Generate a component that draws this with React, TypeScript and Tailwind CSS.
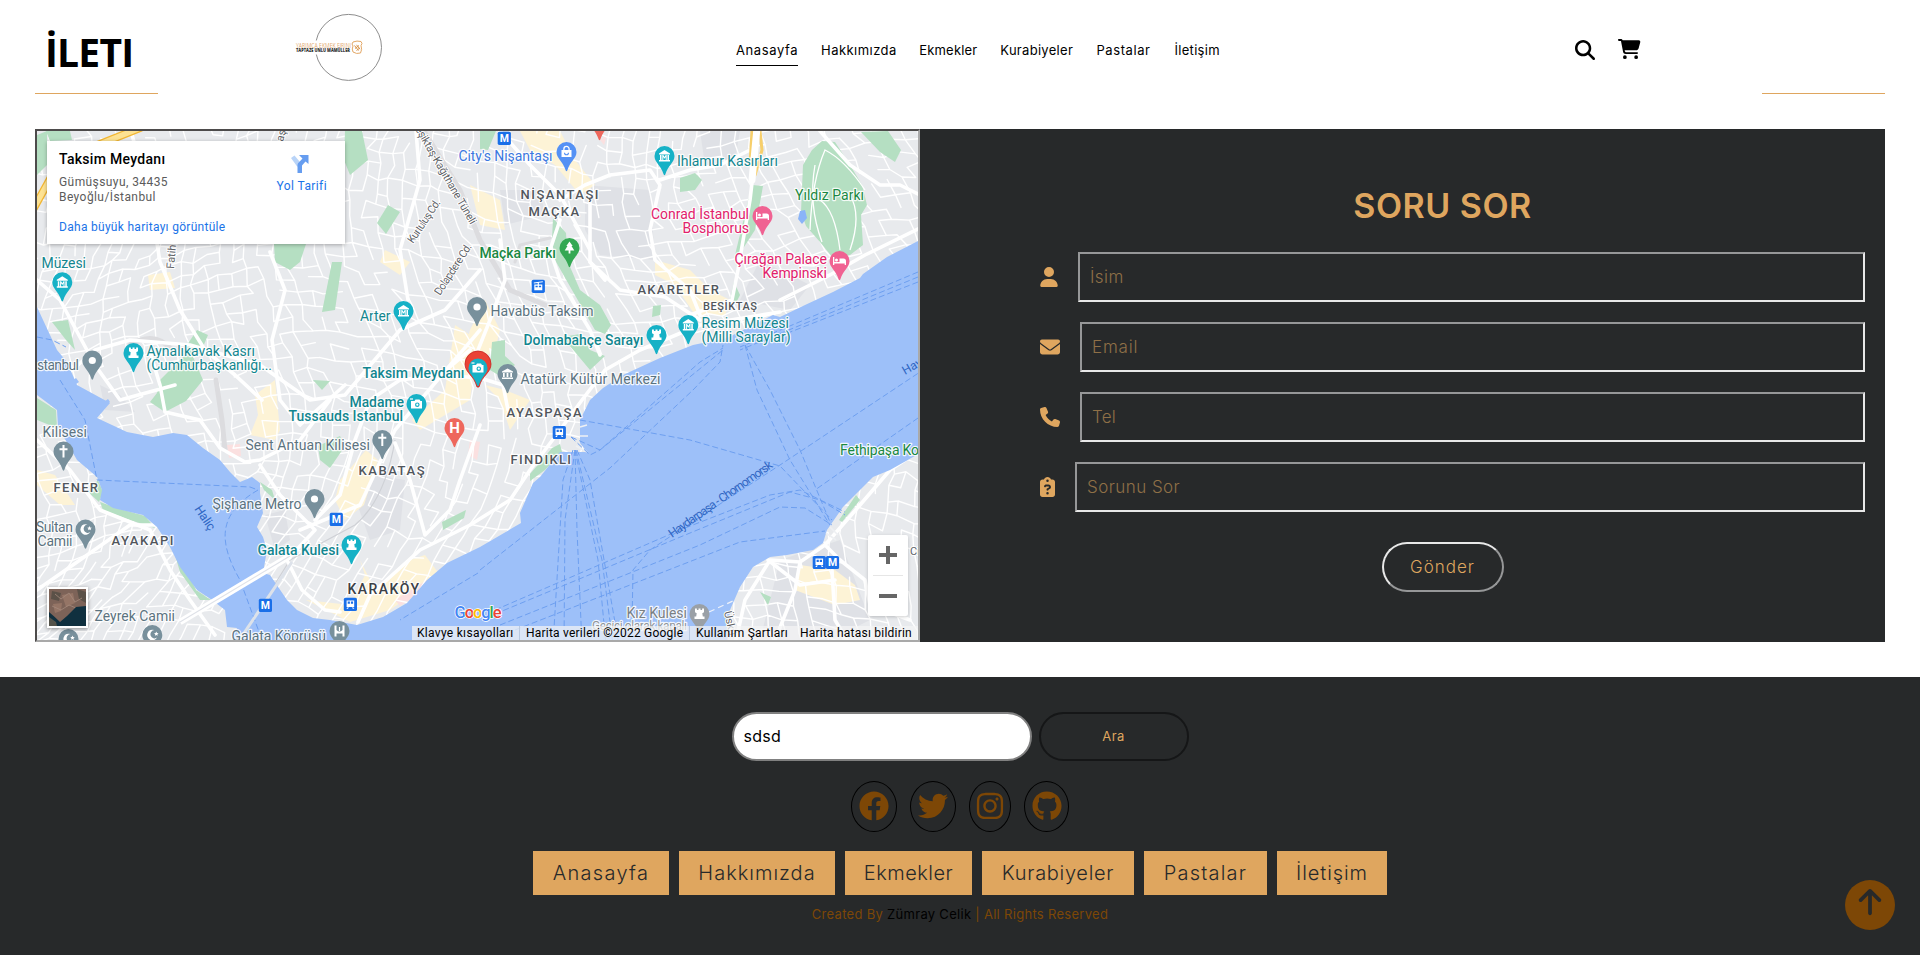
import React from "react";
import { FaMagnifyingGlass, FaCartShopping, FaUser, FaEnvelope, FaPhone, FaArrowUp, FaClipboardQuestion } from "react-icons/fa6";
import { FaFacebook, FaTwitter, FaInstagram, FaGithub } from "react-icons/fa";

const TEAL = "#12868f";
const SLATE = "#5b7380";
const GREEN = "#1a8842";
const PINK = "#e2216b";
const AREA = "#51565c";

/* ---------- street mesh ---------- */
function buildStreets() {
  let seed = 11;
  const rnd = () => {
    seed = (seed * 16807) % 2147483647;
    return seed / 2147483647;
  };
  const cols = 78;
  const rows = 56;
  const nodes: number[][][] = [];
  for (let j = 0; j < rows; j++) {
    nodes[j] = [];
    for (let i = 0; i < cols; i++) {
      const x = i * 13.5 - 60 + Math.sin(j / 5 + i / 17) * 30 + Math.sin(j / 13) * 40 + (rnd() - 0.5) * 6;
      const y = j * 13 + 60 + Math.sin(i / 7 + j / 19) * 28 + (rnd() - 0.5) * 6;
      nodes[j][i] = [x, y];
    }
  }
  let d = "";
  for (let j = 0; j < rows - 1; j++) {
    for (let i = 0; i < cols - 1; i++) {
      const a = nodes[j][i];
      const b = nodes[j][i + 1];
      const c = nodes[j + 1][i];
      const p = a[0].toFixed(1) + " " + a[1].toFixed(1);
      if (rnd() < 0.62) d += "M" + p + "L" + b[0].toFixed(1) + " " + b[1].toFixed(1);
      if (rnd() < 0.74) d += "M" + p + "L" + c[0].toFixed(1) + " " + c[1].toFixed(1);
    }
  }
  return d;
}
const STREETS = buildStreets();

const WATER =
  "M920 240 L887 257 863 274 860 278 833 292 805 305 780 317 773 315 763 320 727 338 693 345 660 358 623 375 603 388 590 400 580 420 580 443 587 452 560 452 540 477 533 483 520 513 521 523 480 547 447 563 427 580 407 603 383 617 357 625 330 620 313 618 297 610 287 600 270 575 263 573 267 550 263 537 257 527 263 513 260 493 260 483 252 477 240 482 230 472 220 460 203 448 187 435 173 433 153 437 127 432 97 418 110 403 77 385 67 362 57 350 37 307 37 395 57 410 58 427 77 460 97 477 102 490 100 500 113 508 143 515 157 527 170 547 180 567 197 590 212 600 225 610 227 627 237 628 230 645 727 645 730 610 740 587 753 567 770 557 787 555 813 550 823 543 827 530 843 507 873 477 890 470 920 453 Z";

const PARKS = [
  "M37 135 L47 131 47 165 37 175 Z",
  "M480 131 L496 131 488 150 480 149 Z",
  "M345 131 L362 131 368 160 350 175 344 160 Z",
  "M377 223 L388 205 400 212 386 234 Z",
  "M274 244 L306 244 300 262 290 270 275 262 Z",
  "M322 312 L332 262 342 262 335 310 Z",
  "M46 131 L70 131 72 140 50 141 Z",
  "M187 345 L197 330 208 335 200 354 186 352 Z",
  "M52 322 L68 320 75 350 66 340 Z",
  "M157 393 L150 402 165 412 186 401 203 380 190 350 160 380 Z",
  "M553 218 L566 233 568 262 580 290 600 305 611 325 605 334 595 330 572 290 555 260 552 240 Z",
  "M562 337 L580 334 590 350 605 356 590 370 575 352 Z",
  "M492 342 L505 340 505 356 515 365 500 376 490 370 Z",
  "M803 165 L812 150 822 141 835 142 850 165 862 185 867 205 861 215 863 245 850 255 833 258 820 242 806 226 801 212 Z",
  "M861 132 L888 131 901 150 895 162 880 152 Z",
  "M752 185 L763 186 755 230 742 250 735 255 Z",
  "M680 178 L695 173 702 180 695 190 680 192 Z",
  "M734 282 L740 295 736 303 730 300 Z",
  "M653 306 L661 305 660 315 652 317 Z",
  "M37 398 L56 410 57 428 37 420 Z",
  "M98 480 L103 492 99 502 88 492 Z",
  "M100 502 L120 509 145 516 155 528 130 520 103 510 Z",
  "M172 545 L182 560 196 590 211 600 200 600 180 572 Z",
  "M318 446 L340 436 345 446 330 468 320 460 Z",
  "M260 482 L272 490 275 500 264 490 Z",
  "M442 522 L466 510 464 518 443 530 Z",
  "M552 448 L560 444 562 452 545 470 530 481 530 474 Z",
  "M839 520 L856 495 860 500 842 522 Z",
  "M313 380 L330 381 322 390 Z",
  "M760 592 L771 597 768 605 Z",
];

const SHOPS = [
  "M520 131 L560 131 575 160 595 185 580 195 555 165 530 150 Z",
  "M655 260 L690 270 710 290 730 300 725 315 695 315 675 285 655 275 Z",
  "M485 300 L500 330 495 350 480 360 465 350 470 330 Z",
  "M455 325 L478 340 470 400 420 430 412 420 445 390 Z",
  "M485 385 L505 390 530 400 510 430 500 400 Z",
  "M340 480 L366 450 378 460 364 505 345 520 335 500 Z",
  "M306 600 L350 605 365 575 360 560 375 590 410 560 425 555 440 575 390 610 350 622 Z",
  "M255 395 L275 380 280 430 275 440 250 435 258 415 Z",
  "M148 275 L170 272 175 288 150 290 Z",
  "M37 470 L55 475 75 505 60 505 37 485 Z",
  "M800 565 L835 570 855 585 860 600 835 605 795 590 Z",
  "M470 185 L500 200 505 230 480 225 Z",
  "M385 250 L410 262 400 275 380 262 Z",
];

const GRAYS = [
  "M585 185 L650 190 655 260 600 255 585 230 Z",
  "M700 131 L740 131 735 160 705 165 Z",
  "M345 470 L405 480 400 530 370 540 Z",
  "M100 385 L120 395 135 412 105 410 Z",
  "M760 260 L810 285 790 310 740 300 Z",
  "M500 190 L540 190 545 215 505 225 Z",
  "M780 560 L840 540 870 620 830 640 760 640 Z",
  "M265 515 L285 510 290 540 275 550 Z",
];

const MAJOR = [
  "M37 280 L60 300 95 365 120 400 175 385",
  "M131 131 L150 200 160 262 180 310 205 350 235 375 262 400",
  "M37 345 L70 372 95 350 130 340 190 345 260 365 310 400 345 395 400 330 445 310 480 270",
  "M270 252 L285 290 272 340 280 400 300 425 345 385",
  "M150 352 L160 385 165 412 200 420 220 448 245 462 260 460 300 440 330 400",
  "M260 465 L280 495 300 515 315 530 287 560 302 590 325 610 340 612",
  "M315 520 L340 495 355 440 370 400 400 380 440 375 470 350",
  "M300 530 L360 505 395 430 480 330",
  "M358 622 L370 595 420 550 470 525 510 500 530 470 560 430 582 400 605 370 640 350 700 325 780 312",
  "M440 375 L480 378 503 385 508 410",
  "M395 443 L410 480 425 535 450 510 460 480 480 425",
  "M780 300 L830 275 865 255 920 228",
  "M758 131 L750 200 738 270 732 300 690 315",
  "M560 220 L550 250 560 280 590 330 600 355",
  "M500 240 L505 280 490 320 478 350",
  "M590 262 L620 290 665 297 700 320",
  "M560 200 L585 185 610 175 650 170 660 185 650 230 655 260 690 290 700 315",
  "M500 131 L530 165 560 195 590 250",
  "M590 190 L590 262 605 280",
  "M820 131 L850 165 880 185 900 185 920 195",
  "M37 440 L70 470 100 510 150 530 170 570 190 600 215 635",
  "M37 590 L80 560 130 525 160 525",
  "M735 645 L745 600 770 560 800 562 825 545 860 505 890 470 920 450",
  "M825 545 L840 560 865 580 870 605 910 620",
  "M832 570 L835 620 850 645",
  "M800 562 L795 590 775 640",
  "M768 560 L800 585 835 580",
  "M416 131 L420 180 400 250 408 300",
  "M660 180 L690 170 720 165 750 150",
];

const FERRIES = [
  "M37 337 L52 340 66 347",
  "M60 380 L85 420 97 480 250 487 258 490",
  "M258 490 C215 515 220 545 240 580 L262 640",
  "M580 420 L690 440 780 466 832 520",
  "M573 450 L563 480 553 645",
  "M575 450 L565 520 564 645",
  "M575 450 L577 530 582 645",
  "M575 450 L598 560 606 645",
  "M576 450 L602 560 613 645",
  "M577 450 L590 480 619 645",
  "M571 437 L590 455 600 450 723 350",
  "M571 437 L600 450 700 362 723 348",
  "M480 570 L610 468 693 390 720 362 723 345",
  "M495 610 L680 530 770 495 800 490 845 512",
  "M495 614 L690 533 790 492 820 500 845 515",
  "M500 625 L700 545 780 507 805 508 832 525",
  "M515 630 L740 542 825 531",
  "M632 625 L633 570 650 550 680 530 780 465 920 372",
  "M918 418 L815 490",
  "M745 345 L757 390 790 460 830 525",
  "M745 345 L770 390 800 450 830 522",
  "M918 272 L740 347",
  "M918 277 L740 350",
  "M918 282 L770 340",
  "M478 573 L400 620",
];

type Label = [string, number, number, number, string, number?, boolean?];
const LABELS: Label[] = [
  ["Müzesi", 41.5, 268, 44.5, TEAL],
  ["Arter", 360, 321, 30.5, TEAL],
  ["Aynalıkavak Kasrı", 146.5, 356, 108.5, TEAL],
  ["(Cumhurbaşkanlığı...", 146.5, 370, 125.5, TEAL],
  ["stanbul", 37, 370, 42, SLATE],
  ["Taksim Meydanı", 362.5, 378, 102, TEAL, 14, true],
  ["City's Nişantaşı", 458.5, 161, 94, "#3b78e0"],
  ["Maçka Parkı", 479.5, 258, 76.5, GREEN, 14, true],
  ["Ihlamur Kasırları", 677, 166, 101, TEAL],
  ["Yıldız Parkı", 795, 200, 69, GREEN],
  ["Conrad İstanbul", 651, 219, 98, PINK],
  ["Bosphorus", 682.5, 233, 66.5, PINK],
  ["Çırağan Palace", 734.5, 264, 92.5, PINK],
  ["Kempinski", 762.5, 278, 64.5, PINK],
  ["Havabüs Taksim", 490.5, 316, 103, SLATE],
  ["Resim Müzesi", 701.5, 328, 87.5, TEAL],
  ["(Milli Saraylar)", 701.5, 342, 89, TEAL],
  ["Dolmabahçe Sarayı", 523.5, 345, 120, TEAL, 14, true],
  ["Atatürk Kültür Merkezi", 520.5, 383.5, 140, SLATE],
  ["Kilisesi", 42.5, 437, 44.5, SLATE],
  ["Madame", 349.5, 407, 54.5, TEAL, 14, true],
  ["Tussauds Istanbul", 288.5, 421, 114.5, TEAL, 14, true],
  ["Sent Antuan Kilisesi", 245.5, 450, 124.5, SLATE],
  ["Şişhane Metro", 212.5, 508.5, 89, SLATE],
  ["Sultan", 36, 532, 37, SLATE],
  ["Camii", 37.5, 546, 35, SLATE],
  ["Galata Kulesi", 257.5, 555, 81.5, TEAL, 14, true],
  ["Zeyrek Camii", 94.5, 621, 80.5, SLATE],
  ["Galata Köprüsü", 231.5, 641, 94.5, SLATE],
  ["Kız Kulesi", 626.5, 618, 60.5, "#7a8084"],
  ["Geçici olarak kapalı", 592, 630, 95, "#8f9498", 12],
  ["Fethipaşa Ko", 840, 454.5, 79, GREEN],
  ["NİŞANTAŞI", 520.5, 199, 78, AREA, 13],
  ["MAÇKA", 528.5, 215.5, 50.5, AREA, 13],
  ["AKARETLER", 637.5, 294, 81.5, AREA, 13],
  ["BEŞİKTAŞ", 703, 310, 54, AREA, 11],
  ["KABATAŞ", 358.5, 475, 66, AREA, 13],
  ["FENER", 53.5, 491.5, 44.5, AREA, 13],
  ["AYAKAPI", 111.5, 544.5, 62, AREA, 13],
  ["KARAKÖY", 347.5, 594, 71.5, "#3b4046", 14, true],
  ["AYASPAŞA", 506.5, 417, 75, AREA, 13],
  ["FINDIKLI", 510.5, 464, 60.5, AREA, 13],
];

type Pin = [number, number, string, string];
const T = "#16b1c6";
const S = "#78909c";
const PINS: Pin[] = [
  [62.3, 282.3, T, "museum"],
  [133.5, 353, T, "castle"],
  [92.3, 360.5, S, "dot"],
  [403.5, 311, T, "museum"],
  [566.5, 152, "#5491f5", "bag"],
  [599.5, 121, "#ee675c", "dot"],
  [664.5, 156, T, "museum"],
  [762.5, 216, "#f06292", "bed"],
  [839.5, 261, "#f06292", "bed"],
  [569.5, 248, "#34a853", "tree"],
  [477, 307, S, "dot"],
  [656.5, 335, T, "castle"],
  [688.3, 325, T, "museum"],
  [507.5, 374, S, "bank"],
  [416.5, 404, T, "camera"],
  [454.5, 428, "#ee675c", "H"],
  [382.3, 440, S, "cross"],
  [63.5, 451.5, S, "cross"],
  [85.5, 529.5, S, "moon"],
  [314.5, 499, S, "dot"],
  [351.5, 545, T, "castle"],
  [152.3, 635, S, "moon"],
  [68.5, 639, S, "moon"],
  [339.5, 631, S, "bridge"],
  [699.5, 614, "#9aa0a6", "castle"],
];

function Glyph({ kind }: { kind: string }) {
  switch (kind) {
    case "museum":
      return <path d="M-5.5 -2.5 L0 -6 5.5 -2.5 V-1.5 H-5.5Z M-4.5 -1 H-3 V4 H-4.5Z M3 -1 H4.5 V4 H3Z M-5.5 4 H5.5 V5.5 H-5.5Z M-2.2 4 V-1 H-1.2 L0 1 1.2 -1 H2.2 V4 H1.2 V1 L0 2.7 -1.2 1 V4Z" fill="#fff" />;
    case "bank":
      return <path d="M-5.5 -2.5 L0 -5.5 5.5 -2.5 V-1.5 H-5.5Z M-4.5 -1 H-2.8 V3 H-4.5Z M-0.9 -1 H0.9 V3 H-0.9Z M2.8 -1 H4.5 V3 H2.8Z M-5.5 3.6 H5.5 V5 H-5.5Z" fill="#fff" />;
    case "castle":
      return <path d="M-4.5 -5.5 H-2.6 V-4 H-1 V-5.5 H1 V-4 H2.6 V-5.5 H4.5 V-1.8 L2.8 -0.8 3.3 2.5 H5 V5 H-5 V2.5 H-3.3 L-2.8 -0.8 -4.5 -1.8Z" fill="#fff" />;
    case "dot":
      return <circle r="3.6" fill="#fff" />;
    case "bag":
      return (
        <g>
          <path d="M-5 -2 H5 V5 H-5Z" fill="#fff" />
          <path d="M-2.6 -1.5 V-3 A2.6 2.6 0 0 1 2.6 -3 V-1.5" fill="none" stroke="#fff" strokeWidth="1.3" />
          <path d="M-2 0.8 A2 2 0 0 0 2 0.8" fill="none" stroke="#5491f5" strokeWidth="1.1" />
        </g>
      );
    case "bed":
      return <path d="M-6.5 -4 H-5.2 V1 H0 V-2.5 H4 Q6.5 -2.5 6.5 0 V4 H5.2 V2.4 H-5.2 V4 H-6.5Z M-4.5 -1 A1.5 1.5 0 1 0 -1.5 -1 A1.5 1.5 0 1 0 -4.5 -1" fill="#fff" />;
    case "tree":
      return <path d="M0 -6.5 L3.2 -2 H2 L4.8 2.4 H0.9 V5.5 H-0.9 V2.4 H-4.8 L-2 -2 H-3.2Z" fill="#fff" />;
    case "camera":
      return (
        <g>
          <path d="M-5.5 -3 H-2 L-1 -4.5 H3 L4 -3 H5.5 V4.5 H-5.5Z" fill="#fff" />
          <circle cx="0.8" cy="0.7" r="2.3" fill="#16b1c6" />
          <circle cx="0.8" cy="0.7" r="1.1" fill="#fff" />
          <path d="M-6.5 -5 h3" stroke="#fff" strokeWidth="1.2" />
        </g>
      );
    case "cross":
      return <path d="M-1 -6.5 H1 V-3.3 H4 V-1.3 H1 V6 H-1 V-1.3 H-4 V-3.3 H-1Z" fill="#fff" />;
    case "moon":
      return <path d="M2 -5 A5.3 5.3 0 1 0 4.8 2.6 A4.2 4.2 0 1 1 2 -5Z M4 -3.5 l.7 1.5 1.6 .2 -1.2 1 .3 1.6 -1.4-.8 -1.4 .8 .3-1.6 -1.2-1 1.6-.2Z" fill="#fff" />;
    case "bridge":
      return <path d="M-5 -5.5 H-3 V-1 Q0 2 3 -1 V-5.5 H5 V5.5 H3 V2.5 H-3 V5.5 H-5Z M-0.6 -4 h1.2 v4 h-1.2Z" fill="#fff" />;
    default:
      return (
        <text y="5.2" textAnchor="middle" fontSize="15" fontWeight="700" fill="#fff">
          H
        </text>
      );
  }
}

function PinShape({ color, r = 10 }: { color: string; r?: number }) {
  return <path transform={`scale(${r / 10})`} d="M0 -10 A10 10 0 0 1 10 0 C10 6.5 4 8.5 0.8 18.5 Q0 20 -0.8 18.5 C-4 8.5 -10 6.5 -10 0 A10 10 0 0 1 0 -10Z" fill={color} />;
}

const BADGES: [number, number, string][] = [
  [504.3, 138.3, "M"],
  [538.3, 286.3, "cable"],
  [336.3, 519.4, "M"],
  [265.4, 605.4, "M"],
  [350.4, 604.4, "tram"],
  [559.3, 432.5, "tram"],
  [819.3, 562.5, "tram"],
  [832.5, 562.5, "M"],
];

function CityMap() {
  return (
    <svg className="block size-full" viewBox="37 131 881 509" preserveAspectRatio="none" fontFamily="Roboto, 'Noto Sans', sans-serif">
      <rect x="30" y="125" width="900" height="520" fill="#e8eaed" />
      <g fill="#dfe1e6">{GRAYS.map((d) => <path key={d} d={d} />)}</g>
      <g fill="#fdf3d6">{SHOPS.map((d) => <path key={d} d={d} />)}</g>
      <g fill="#fbe0e0">
        <path d="M227 445 L240 444 241 456 229 458Z" />
        <path d="M600 140 L607 135 604 145Z" />
        <path d="M470 440 L480 442 477 460 468 455Z" />
        <path d="M395 600 L430 578 436 583 400 606Z" />
      </g>
      <path d={STREETS} stroke="#fff" strokeWidth="1.4" fill="none" strokeLinecap="round" />
      <g fill="#b5dfc2">{PARKS.map((d) => <path key={d} d={d} />)}</g>
      <g stroke="#dcdcdf" fill="none" strokeWidth="5" strokeLinecap="round">
        <path d="M424 131 L460 190 480 240 510 290 545 305" />
        <path d="M216 380 L222 420 225 450" />
        <path d="M130 345 Q155 330 172 350" />
        <path d="M515 262 L520 245 550 238" strokeWidth="3" />
      </g>
      <path d="M395 440 Q385 500 355 525 L290 560 240 640" stroke="#cfd1d6" strokeWidth="1.2" fill="none" />
      <g stroke="#fff" fill="none" strokeWidth="3.6" strokeLinejoin="round" strokeLinecap="round">
        {MAJOR.map((d) => <path key={d} d={d} />)}
      </g>
      <g fill="none" stroke="#fff" strokeWidth="1.3">
        <path d="M810 230 Q812 180 825 150 Q845 160 865 190" />
        <path d="M822 242 Q808 205 815 165" />
        <path d="M840 250 Q835 210 820 200 M850 250 Q862 215 850 195" />
      </g>
      <path d="M800 211 l5 -1 2 8 -5 6 -4 -5Z" fill="#8ab4f8" />
      <g fill="none" strokeLinecap="round">
        <path d="M30 215 L55 170 M95 146 L140 128" stroke="#f2b632" strokeWidth="8" />
        <path d="M30 215 L55 170 M95 146 L140 128" stroke="#fde293" strokeWidth="5.5" />
        <path d="M752 131 L750 165 M760 131 L762 150 755 175" stroke="#f7cf6b" strokeWidth="3" />
        <path d="M757 128 L752 180" stroke="#fff" strokeWidth="7" />
      </g>
      <path d={WATER} fill="#9dc0f9" />
      <path d="M60 388 l16 -10 3 4 -15 10Z M96 408 l12 -9 2 3 -12 9Z" fill="#9dc0f9" />
      <g stroke="#eef0f3" strokeWidth="1.6">
        <path d="M580 427 l7 -2 M580 436 l8 0 M576 446 l11 6 M826 533 l10 7 M830 527 l8 8" />
      </g>
      <g fill="none" stroke="#6d9ff0" strokeWidth="1" strokeDasharray="6 3">
        {FERRIES.map((d) => <path key={d} d={d} />)}
      </g>
      <path d="M180 622 L290 556" stroke="#fff" strokeWidth="6.5" />
      <path d="M180 622 L290 556" stroke="#dfe2e8" strokeWidth="1.2" />
      <path d="M238 642 L292 562" stroke="#dde2ea" strokeWidth="3" />
      <path d="M709 612 L735 600" stroke="#eef2fa" strokeWidth="1.2" strokeDasharray="6 4" />

      <g fill="#5f6368" fontSize="11" stroke="#fff" strokeWidth="2" paintOrder="stroke" strokeLinejoin="round">
        <text transform="translate(415 129) rotate(60)" textLength="111">eşiktaş-Kağıthane Tüneli</text>
        <text transform="translate(413 244) rotate(-56)" textLength="50">Kurtuluş Cd.</text>
        <text transform="translate(440 296) rotate(-57)" textLength="59">Dolapdere Cd.</text>
        <text transform="translate(174 269) rotate(-85)">Fatih S</text>
        <text transform="translate(283 142) rotate(-75)">aş</text>
        <text transform="translate(724 612) rotate(78)">Üskü</text>
        <text x="910" y="555">Ci</text>
      </g>
      <g fill="#2f66c4">
        <text transform="translate(194 509) rotate(56)" fontSize="12.5" textLength="27">Haliç</text>
        <text transform="translate(672 538) rotate(-35)" fontSize="12" textLength="124">Haydarpaşa - Chornomorsk</text>
        <text transform="translate(905 375) rotate(-30)" fontSize="12">Hay</text>
      </g>

      {PINS.map(([x, y, color, kind], i) => (
        <g key={i} transform={`translate(${x} ${y})`}>
          <PinShape color={color} />
          <Glyph kind={kind} />
        </g>
      ))}
      <g transform="translate(478 364)">
        <path d="M0 -13 A13 13 0 0 1 13 0 C13 9 4 11 1 23 H-1 C-4 11 -13 9 -13 0 A13 13 0 0 1 0 -13Z" fill="#ea4335" stroke="#c5221f" strokeWidth="0.8" />
      </g>
      <g transform="translate(478 368)">
        <PinShape color={T} r={9.5} />
        <Glyph kind="camera" />
      </g>

      {BADGES.map(([x, y, kind], i) => (
        <g key={i} transform={`translate(${x} ${y})`}>
          <rect x="-6.6" y="-6.6" width="13.2" height="13.2" rx="1.6" fill="#1a6fe8" />
          {kind === "M" ? (
            <text y="3.9" textAnchor="middle" fontSize="10.5" fontWeight="700" fill="#fff">
              M
            </text>
          ) : kind === "tram" ? (
            <path fillRule="evenodd" d="M-3.8 -4 H3.8 V2.5 H-3.8Z M-2.7 -2.8 V-0.6 H-0.5 V-2.8Z M0.5 -2.8 V-0.6 H2.7 V-2.8Z M-3 3 H-1.4 L-2.5 4.4 H-4Z M3 3 H1.4 L2.5 4.4 H4Z" fill="#fff" />
          ) : (
            <path fillRule="evenodd" d="M-4.5 -3.8 L4.5 -5 V-4 L0.6 -3.5 V-1.8 H4 V4 H-4 V-1.8 H-0.6 V-3.3 L-4.5 -2.8Z M-2.8 -0.6 V1 H-0.6 V-0.6Z M0.6 -0.6 V1 H2.8 V-0.6Z" fill="#fff" />
          )}
        </g>
      ))}

      {LABELS.map(([text, x, y, w, fill, size, bold]) => (
        <text key={text} x={x} y={y} textLength={w} fill={fill} fontSize={size ?? 14} fontWeight={bold || fill === AREA ? 500 : 400} stroke="#fff" strokeWidth="2.4" strokeOpacity="0.85" paintOrder="stroke" strokeLinejoin="round">
          {text}
        </text>
      ))}
      <text x="454.5" y="618" fontSize="16.5" textLength="47" fontWeight="500" stroke="#fff" strokeWidth="1.5" paintOrder="stroke">
        <tspan fill="#4285f4">G</tspan>
        <tspan fill="#ea4335">o</tspan>
        <tspan fill="#fbbc04">o</tspan>
        <tspan fill="#4285f4">g</tspan>
        <tspan fill="#34a853">l</tspan>
        <tspan fill="#ea4335">e</tspan>
      </text>
    </svg>
  );
}

function MapPanel() {
  return (
    <div className="relative h-[513px] w-[885px] shrink-0 overflow-hidden border-2 border-t-[#4d4b4b] border-r-[#a9a9a9] border-b-[#a9a9a9] border-l-[#4d4b4b] font-[Roboto,sans-serif]">
      <CityMap />
      <div className="absolute top-[10px] left-[10px] flex h-[103px] w-[298px] justify-between bg-white pr-[18px] pl-3 shadow-[0_1px_4px_rgba(0,0,0,0.3)]">
        <div className="flex flex-col pt-2 text-xs leading-[15px] tracking-[0.42px] text-[#5b5b5b]">
          <span className="text-sm leading-5 font-medium tracking-[0.3px] text-black">Taksim Meydanı</span>
          <span className="mt-1.5">Gümüşsuyu, 34435</span>
          <span>Beyoğlu/İstanbul</span>
          <span className="mt-[15px] tracking-[0.29px] text-[#1a73e8]">Daha büyük haritayı görüntüle</span>
        </div>
        <div className="flex flex-col items-center pt-[14px]">
          <svg width="18" height="18" viewBox="0 0 18 18" className="mr-1">
            <path d="M0 3 L3.5 0.5 9 7 6.5 12Z" fill="#b9d4f8" />
            <path d="M8 0 H17.5 V9 L14.5 6.5 11 10.5 V18 H6.5 V10 Q6.5 8.5 8 7.2 L11.5 3.5Z" fill="#669df0" />
          </svg>
          <span className="mt-1.5 text-xs leading-[15px] tracking-[0.4px] text-[#1a73e8]">Yol Tarifi</span>
        </div>
      </div>
      <div className="absolute top-[404px] right-[10px] flex h-[81px] w-10 flex-col items-center rounded-[2px] bg-white shadow-[0_1px_4px_-1px_rgba(0,0,0,0.3)]">
        <svg width="40" height="81" viewBox="0 0 40 81">
          <path d="M11 20 H29 M20 11 V29 M11 61 H29" stroke="#666" strokeWidth="4" />
          <path d="M5 40.5 H35" stroke="#e6e6e6" />
        </svg>
      </div>
      <div className="absolute top-[456px] left-[10px] size-[41px] border-2 border-white shadow-[0_1px_4px_rgba(0,0,0,0.4)]">
        <svg className="block" width="37" height="37" viewBox="0 0 37 37">
          <rect width="37" height="37" fill="#7d6358" />
          <path d="M3 2 L12 4 10 12 2 10Z M28 0 L37 3 V14 L30 10Z" fill="#5b5148" />
          <path d="M13 6 L24 4 26 14 17 18Z M4 15 L13 14 12 22 6 24Z" fill="#957566" />
          <path d="M6 5 l6 5 8 -6 6 9 7 -4 M3 17 l9 4 8 -5 7 3" stroke="#a58a7c" strokeWidth="0.8" fill="none" />
          <path d="M0 23 Q6 28 11 33 L18 27 27 18 37 17 V37 H0Z" fill="#10303f" />
          <path d="M0 28 L7 33 8 37 H0Z" fill="#54534a" />
        </svg>
      </div>
      <div className="absolute right-0 bottom-0 flex h-[14px] w-[506px] items-center bg-[#f5f5f5]/70 text-xs leading-[14px] whitespace-nowrap text-black">
        <span className="w-[108px] border-r border-[#b9c9e0] pl-[5px] tracking-[0.3px]">Klavye kısayolları</span>
        <span className="w-[170px] border-r border-[#b9c9e0] pl-[6px] tracking-[0.22px]">Harita verileri ©2022 Google</span>
        <span className="w-[110px] pl-[6px] tracking-[0.24px]">Kullanım Şartları</span>
        <span className="tracking-[0.22px]">Harita hatası bildirin</span>
      </div>
    </div>
  );
}

function Logo() {
  return (
    <svg width="90" height="70" viewBox="294 12 90 70" className="font-['Open_Sans',sans-serif]">
      <circle cx="348.5" cy="47.4" r="33" fill="none" stroke="#8e8e8e" strokeWidth="1" />
      <rect x="312" y="40.5" width="12" height="14" fill="#fff" />
      <text x="296" y="48" fontSize="8" fill="#dfaa72" textLength="55" lengthAdjust="spacingAndGlyphs">YARIMCA EKMEK FIRINI</text>
      <text x="296" y="52.4" fontSize="4.6" fontWeight="800" fill="#333" textLength="54" lengthAdjust="spacingAndGlyphs">TAPTAZE UNLU MAMÜLLER</text>
      <path d="M353 42 q4 -1.6 8 -0.5 q2 2 0 4 q1.5 4 -0.5 7.5 q-4 1.4 -7.5 -1 q-1.500 -3 0 -6 q-2 -2 0 -4Z" fill="#fff" stroke="#e3a867" />
      <path d="M354.5 45.500 l4 5 M356.500 44.800 l3.5 4.500 M355 48.500 l4 -3 M356.5 50.500 l3.500 -2.600" stroke="#d9944a" strokeWidth="1" />
    </svg>
  );
}

const NAV = [
  { label: "Anasayfa", box: "w-[62px] border-b border-black tracking-[0.6px]" },
  { label: "Hakkımızda", box: "w-[75px] tracking-[0.45px]" },
  { label: "Ekmekler", box: "w-[58px] tracking-[0.2px]" },
  { label: "Kurabiyeler", box: "w-[73px] tracking-[0.3px]" },
  { label: "Pastalar", box: "w-[55px] tracking-[0.6px]" },
  { label: "İletişim", box: "w-[45px] tracking-[0.3px]" },
];

const FIELDS = [
  { placeholder: "İsim", spacing: "tracking-[0.4px]", icon: <FaUser className="h-5 w-[18px] shrink-0" /> },
  { placeholder: "Email", spacing: "tracking-[0.8px]", icon: <FaEnvelope className="size-5 shrink-0" /> },
  { placeholder: "Tel", spacing: "tracking-[0.2px]", icon: <FaPhone className="size-5 shrink-0" /> },
  { placeholder: "Sorunu Sor", spacing: "tracking-[0.45px]", icon: <FaClipboardQuestion className="h-5 w-[15px] shrink-0" /> },
];

const LINKS = [
  { label: "Anasayfa", box: "w-[136px] tracking-[1.3px]" },
  { label: "Hakkımızda", box: "w-[156px] tracking-[1px]" },
  { label: "Ekmekler", box: "w-[127px] tracking-[0.5px]" },
  { label: "Kurabiyeler", box: "w-[152px] tracking-[0.7px]" },
  { label: "Pastalar", box: "w-[123px] tracking-[1.2px]" },
  { label: "İletişim", box: "w-[110px] tracking-[0.9px]" },
];

export default function App() {
  return (
    <div className="flex h-[955px] w-[1920px] flex-col overflow-hidden bg-white font-[Inter,'Noto_Sans',sans-serif] text-black">
      <header className="flex h-[93px] shrink-0 items-start">
        <h1 className="w-[249px] pt-[22px] pl-[45px] font-['Open_Sans',sans-serif] text-[39px] leading-[60px] font-bold tracking-[-0.8px]">İLETI</h1>
        <div className="ml-[45px] w-[442px] pt-3">
          <Logo />
        </div>
        <nav className="flex gap-[23.1px] pt-[39px] text-[13px] leading-[22px]">
          {NAV.map((n) => (
            <a key={n.label} className={"h-[27px] whitespace-nowrap " + n.box}>
              {n.label}
            </a>
          ))}
        </nav>
        <div className="ml-[356px] flex gap-[23px] pt-[40px]">
          <FaMagnifyingGlass className="size-5" />
          <FaCartShopping className="-mt-px h-5 w-[22.5px]" />
        </div>
      </header>
      <div className="flex h-9 shrink-0 items-start justify-between px-[35px]">
        <div className="h-px w-[123px] bg-[#dfa65f]" />
        <div className="h-px w-[123px] bg-[#dfa65f]" />
      </div>

      <main className="flex h-[513px] shrink-0 px-[35px]">
        <MapPanel />
        <section className="flex flex-1 flex-col bg-[#27292a] pr-5 pl-[120px] text-[#dfa65f]">
          <h2 className="mt-[51px] mr-5 h-[52px] text-center text-[34px] leading-[52px] font-semibold tracking-[0.5px]">SORU SOR</h2>
          <form className="mt-5 flex flex-col gap-5">
            {FIELDS.map((f) => (
              <label key={f.placeholder} className="flex h-[50px] items-center gap-5">
                {f.icon}
                <input
                  placeholder={f.placeholder}
                  className={"h-full min-w-0 flex-1 border-2 border-t-[#969798] border-r-[#e8e8e8] border-b-[#e8e8e8] border-l-[#969798] bg-transparent px-[10px] text-[17px] font-light placeholder:text-[#8f7047] " + f.spacing}
                />
              </label>
            ))}
            <button type="button" className="mt-[10px] mr-5 h-[50px] w-[122px] self-center rounded-full border-2 border-t-[#e8e8e8] border-r-[#969798] border-b-[#969798] border-l-[#e8e8e8] pt-px text-[17px] font-light tracking-[1px]">
              Gönder
            </button>
          </form>
        </section>
      </main>

      <footer className="relative mt-[35px] flex h-[278px] shrink-0 flex-col items-center bg-[#27292a] pt-[35px]">
        <div className="flex gap-[7px]">
          <input defaultValue="sdsd" className="h-[49px] w-[300px] rounded-full border-2 border-[#808080] bg-white px-[10px] pb-0.5 text-base tracking-[0.3px]" />
          <button className="h-[49px] w-[150px] rounded-full border-2 border-[#151617] text-[13px] tracking-[0.4px] text-[#dfa65f]">Ara</button>
        </div>
        <div className="mt-5 flex gap-[13px] text-[30px] text-[#7d4706]">
          <span className="flex h-[51px] w-[46px] items-center justify-center rounded-[50%] border border-black pb-0.5">
            <FaFacebook />
          </span>
          <span className="flex h-[51px] w-[46px] items-center justify-center rounded-[50%] border border-black pb-0.5">
            <FaTwitter />
          </span>
          <span className="flex h-[51px] w-[42px] items-center justify-center rounded-[50%] border border-black pb-0.5">
            <FaInstagram className="shrink-0" />
          </span>
          <span className="flex h-[51px] w-[45px] items-center justify-center rounded-[50%] border border-black pb-0.5">
            <FaGithub />
          </span>
        </div>
        <nav className="mt-[19px] flex gap-[10px]">
          {LINKS.map((l) => (
            <a key={l.label} className={"flex h-11 items-center justify-center bg-[#dfa65f] text-[20px] font-light whitespace-nowrap text-[#27292a] " + l.box}>
              {l.label}
            </a>
          ))}
        </nav>
        <p className="mt-[9px] text-[13px] leading-5 tracking-[0.3px] text-[#7d4706]">
          Created By <span className="text-black">Zümray Celik</span> | All Rights Reserved
        </p>
        <a className="absolute right-[25px] bottom-[25px] flex size-[50px] justify-center rounded-full bg-[#7d4706] pt-[7px] text-[30px] text-[#27292a]">
          <FaArrowUp />
        </a>
      </footer>
    </div>
  );
}
